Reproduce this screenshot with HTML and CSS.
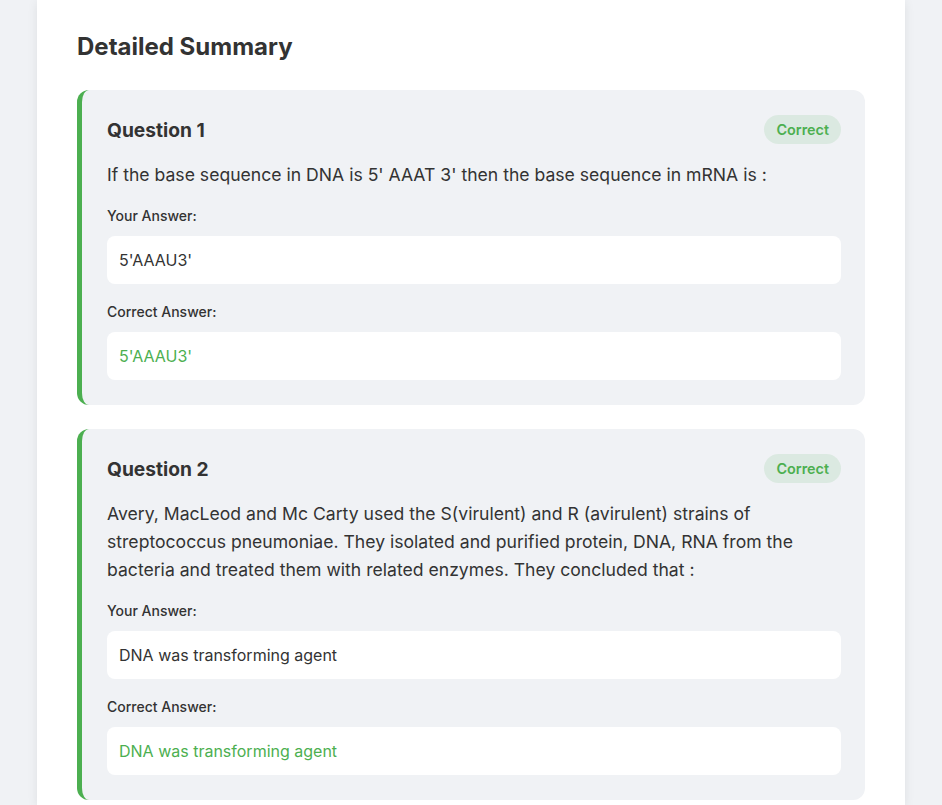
FILE: index.html
```html
<!DOCTYPE html>
<html lang="en">
<head>
<meta charset="utf-8">
<title>Detailed Summary</title>
<link rel="stylesheet" href="styles.css">
</head>
<body>
<div class="page">
  <section class="panel">
    <h2 class="panel-title">Detailed Summary</h2>
    <div class="question-list">
      <article class="question correct">
        <div class="q-head">
          <h3 class="q-title">Question 1</h3>
          <span class="badge">Correct</span>
        </div>
        <p class="q-text">If the base sequence in DNA is 5' AAAT 3' then the base sequence in mRNA is :</p>
        <div class="answer">
          <div class="answer-label">Your Answer:</div>
          <div class="answer-box">5'AAAU3'</div>
        </div>
        <div class="answer">
          <div class="answer-label">Correct Answer:</div>
          <div class="answer-box right">5'AAAU3'</div>
        </div>
      </article>
      <article class="question correct">
        <div class="q-head">
          <h3 class="q-title">Question 2</h3>
          <span class="badge">Correct</span>
        </div>
        <p class="q-text">Avery, MacLeod and Mc Carty used the S(virulent) and R (avirulent) strains of streptococcus pneumoniae. They isolated and purified protein, DNA, RNA from the bacteria and treated them with related enzymes. They concluded that :</p>
        <div class="answer">
          <div class="answer-label">Your Answer:</div>
          <div class="answer-box">DNA was transforming agent</div>
        </div>
        <div class="answer">
          <div class="answer-label">Correct Answer:</div>
          <div class="answer-box right">DNA was transforming agent</div>
        </div>
      </article>
    </div>
  </section>
</div>
</body>
</html>
```

FILE: styles.css
```css
* { box-sizing: border-box; }
html, body {
  margin: 0;
  padding: 0;
  background: #f0f2f5;
  font-family: Inter, "Noto Sans", sans-serif;
  color: #333;
}
.page {
  display: flex;
  justify-content: center;
  height: 805px;
  overflow: hidden;
}
.panel {
  width: 868px;
  background: #fff;
  box-shadow: 0 2px 10px rgba(0, 0, 0, 0.08);
  padding: 32px 40px 40px;
}
.panel-title {
  margin: 0 0 28px;
  font-size: 24px;
  line-height: 30px;
  font-weight: 700;
  color: #333;
}
.question-list {
  display: flex;
  flex-direction: column;
  gap: 24px;
}
.question {
  background: #f0f2f5;
  border-radius: 12px;
  border-left: 5px solid #4caf50;
  padding: 25px 24px 25px 25px;
}
.q-head {
  display: flex;
  justify-content: space-between;
  align-items: center;
  height: 29px;
  margin-bottom: 17px;
}
.q-title {
  margin: 0;
  font-size: 19.2px;
  font-weight: 700;
  color: #333;
}
.badge {
  display: inline-flex;
  align-items: center;
  height: 29px;
  padding: 0 12px;
  border-radius: 15px;
  background: rgba(76, 175, 80, 0.12);
  color: #4caf50;
  font-size: 14.4px;
  font-weight: 600;
}
.q-text {
  margin: 0;
  font-size: 17.6px;
  line-height: 28px;
  color: #333;
}
.answer {
  margin-top: 16px;
}
.answer + .answer {
  margin-top: 17px;
}
.answer-label {
  font-size: 14px;
  line-height: 22px;
  font-weight: 500;
  color: #333;
  margin-bottom: 9px;
}
.answer-box {
  background: #fff;
  border-radius: 8px;
  height: 48px;
  padding: 0 12px;
  display: flex;
  align-items: center;
  font-size: 16px;
  color: #333;
}
.answer-box.right {
  color: #4caf50;
}
```
